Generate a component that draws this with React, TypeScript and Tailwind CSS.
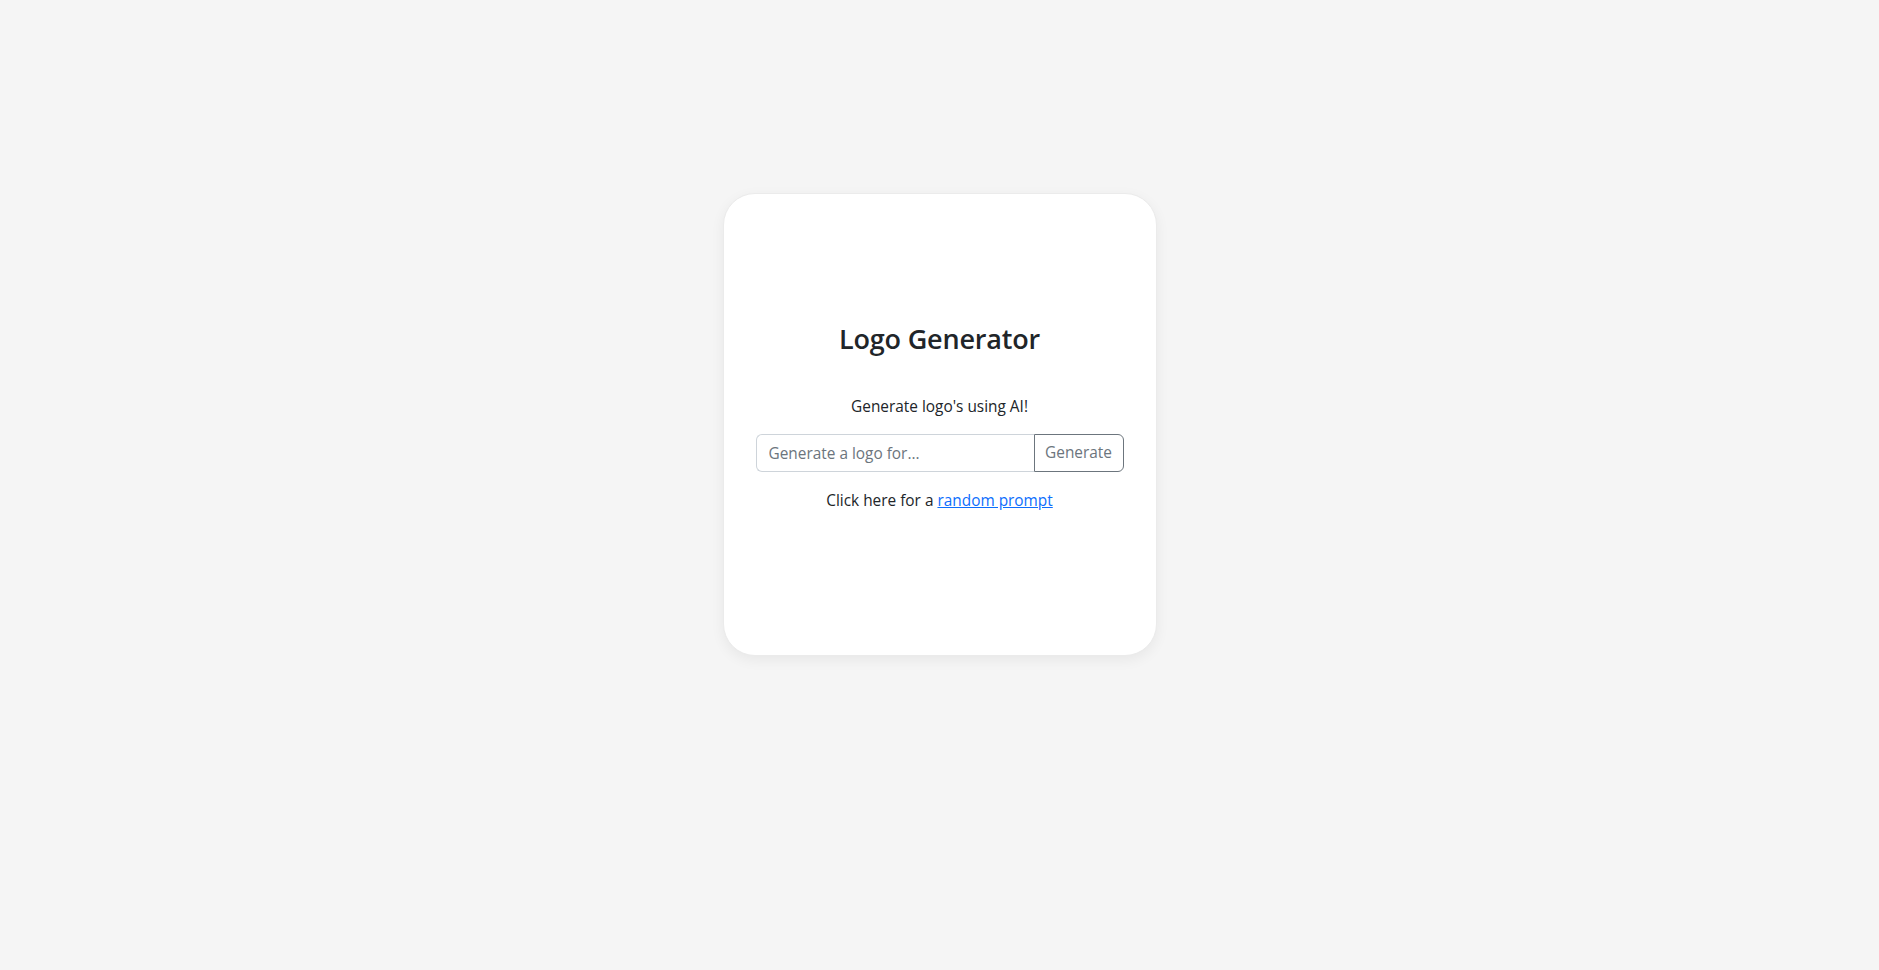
import React, { useState } from "react";

const App: React.FC = () => {
  const [prompt, setPrompt] = useState("");

  return (
    <div
      className="min-h-screen w-full bg-[#f5f5f5] pt-[193px] text-[#212529]"
      style={{ fontFamily: '"Open Sans", "Noto Sans", sans-serif' }}
    >
      <div className="mx-auto flex h-[463px] w-[434px] flex-col items-center rounded-[32px] border border-[#ebebeb] bg-white px-8 pt-[128px] shadow-[0_4px_14px_rgba(0,0,0,0.06)]">
        {/* Title */}
        <h3 className="h-[34px] text-[27px] font-semibold leading-[34px] tracking-[-0.2px]">Logo Generator</h3>

        <p className="mt-[39px] h-6 text-[15.4px] leading-6">Generate logo's using AI!</p>

        {/* Prompt input */}
        <div className="mt-[15px] flex h-[38px] w-full">
          <input
            type="text"
            value={prompt}
            onChange={(e) => setPrompt(e.target.value)}
            placeholder="Generate a logo for..."
            className="h-full min-w-0 flex-1 rounded-l-[6px] border border-r-0 border-[#ced4da] px-3 text-[15.4px] text-[#212529] outline-none placeholder:text-[#6c757d]"
          />
          <button
            type="button"
            className="h-full w-[90px] rounded-r-[6px] border border-[#6c757d] text-[15.4px] text-[#6c757d]"
          >
            Generate
          </button>
        </div>

        <p className="mt-[17px] h-6 text-[15.4px] leading-6">
          Click here for a{" "}
          <a href="#" className="text-[#0d6efd] underline">
            random prompt
          </a>
        </p>
      </div>
    </div>
  );
};

export default App;
